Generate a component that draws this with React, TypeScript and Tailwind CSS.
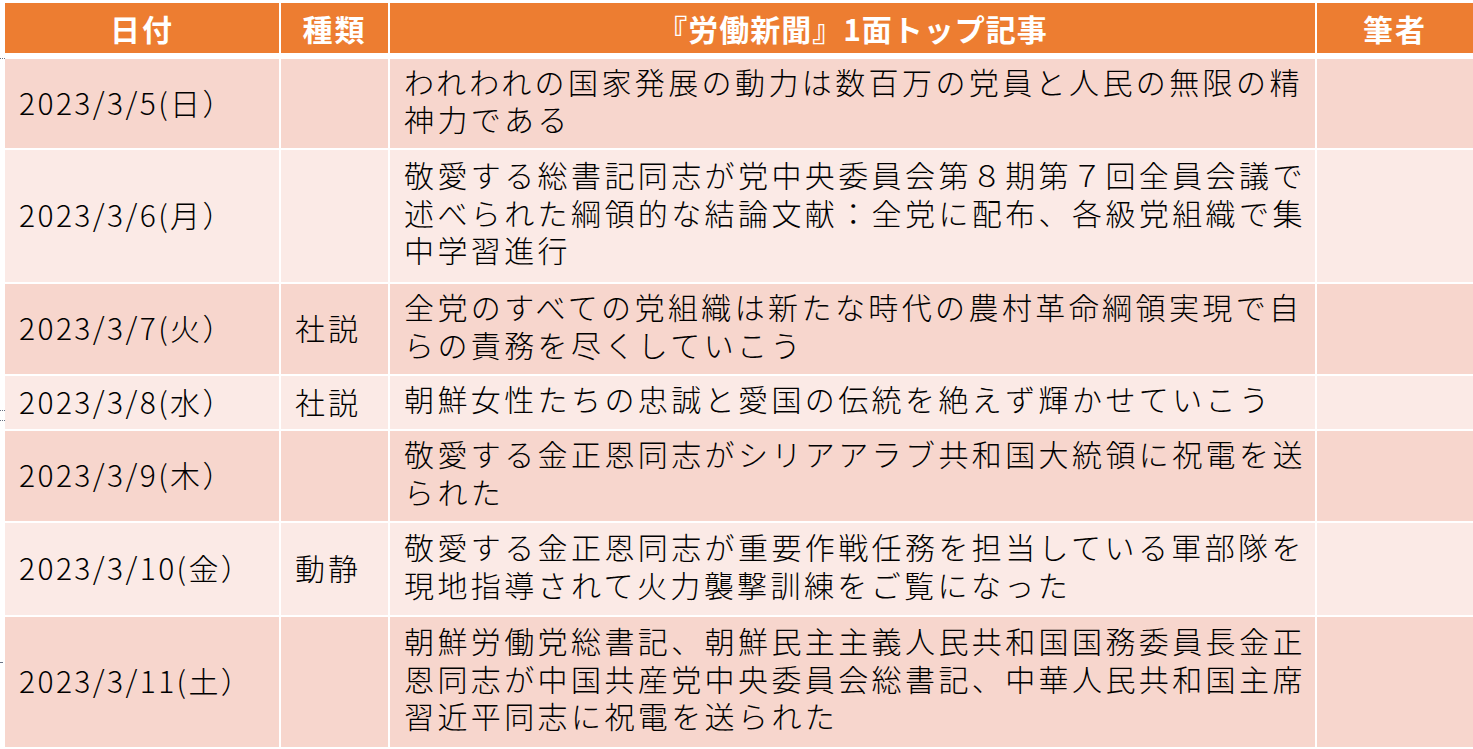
import React from "react";

const font = {
  fontFamily: '"Noto Sans CJK JP", "Noto Sans", sans-serif',
};

type Row = {
  date: string;
  kind: string;
  lines: string[];
  h: string;
  bg: string;
};

const rows: Row[] = [
  {
    date: "2023/3/5(日）",
    kind: "",
    lines: ["われわれの国家発展の動力は数百万の党員と人民の無限の精", "神力である"],
    h: "h-[89px]",
    bg: "bg-[#f7d6cd]",
  },
  {
    date: "2023/3/6(月）",
    kind: "",
    lines: [
      "敬愛する総書記同志が党中央委員会第８期第７回全員会議で",
      "述べられた綱領的な結論文献：全党に配布、各級党組織で集",
      "中学習進行",
    ],
    h: "h-[132px]",
    bg: "bg-[#fbeae6]",
  },
  {
    date: "2023/3/7(火）",
    kind: "社説",
    lines: ["全党のすべての党組織は新たな時代の農村革命綱領実現で自", "らの責務を尽くしていこう"],
    h: "h-[90px]",
    bg: "bg-[#f7d6cd]",
  },
  {
    date: "2023/3/8(水）",
    kind: "社説",
    lines: ["朝鮮女性たちの忠誠と愛国の伝統を絶えず輝かせていこう"],
    h: "h-[53px]",
    bg: "bg-[#fbeae6]",
  },
  {
    date: "2023/3/9(木）",
    kind: "",
    lines: ["敬愛する金正恩同志がシリアアラブ共和国大統領に祝電を送", "られた"],
    h: "h-[90px]",
    bg: "bg-[#f7d6cd]",
  },
  {
    date: "2023/3/10(金）",
    kind: "動静",
    lines: ["敬愛する金正恩同志が重要作戦任務を担当している軍部隊を", "現地指導されて火力襲撃訓練をご覧になった"],
    h: "h-[92px]",
    bg: "bg-[#fbeae6]",
  },
  {
    date: "2023/3/11(土）",
    kind: "",
    lines: [
      "朝鮮労働党総書記、朝鮮民主主義人民共和国国務委員長金正",
      "恩同志が中国共産党中央委員会総書記、中華人民共和国主席",
      "習近平同志に祝電を送られた",
    ],
    h: "h-[130px]",
    bg: "bg-[#f7d6cd]",
  },
];

const cols = "grid grid-cols-[274px_107px_925px_156px] gap-x-[2px]";

export default function App() {
  return (
    <div
      className="relative w-[1473px] h-[749px] overflow-hidden bg-white pl-[5px] pt-[3px]"
      style={font}
    >
      <div className="flex flex-col gap-y-[2px]">
        <div className={`${cols} h-[50px] mb-[4px]`}>
          <div className="bg-[#ed7d31] text-white font-bold text-[30px] flex items-center justify-center tracking-[2px]">
            日付
          </div>
          <div className="bg-[#ed7d31] text-white font-bold text-[30px] flex items-center justify-center tracking-[2px]">
            種類
          </div>
          <div className="bg-[#ed7d31] text-white font-bold text-[30px] flex items-center justify-center tracking-[1px]">
            『労働新聞』1面トップ記事
          </div>
          <div className="bg-[#ed7d31] text-white font-bold text-[30px] flex items-center justify-center tracking-[2px]">
            筆者
          </div>
        </div>
        {rows.map((r, i) => (
          <div key={i} className={`${cols} ${r.h}`}>
            <div
              className={`${r.bg} flex items-center pl-[14px] pb-[3px] text-[30px] text-black font-light tracking-[2.4px] whitespace-nowrap`}
            >
              {r.date}
            </div>
            <div
              className={`${r.bg} flex items-center pl-[14px] pb-[3px] text-[30px] text-black font-light tracking-[3px]`}
            >
              {r.kind}
            </div>
            <div
              className={`${r.bg} flex flex-col justify-center pl-[14px] pb-[7px] text-[30px] leading-[37.5px] text-black font-light tracking-[3.4px] whitespace-nowrap`}
            >
              {r.lines.map((l, j) => (
                <div key={j}>{l}</div>
              ))}
            </div>
            <div className={`${r.bg}`} />
          </div>
        ))}
      </div>
      <div className="absolute left-0 top-[58px] w-[5px] border-t border-dotted border-gray-500" />
      <div className="absolute left-0 top-[410px] w-[5px] border-t border-dotted border-gray-500" />
      <div className="absolute left-0 top-[420px] w-[5px] border-t border-dotted border-gray-500" />
      <div className="absolute left-0 top-[662px] w-[2px] border-t border-dotted border-gray-500" />
    </div>
  );
}
